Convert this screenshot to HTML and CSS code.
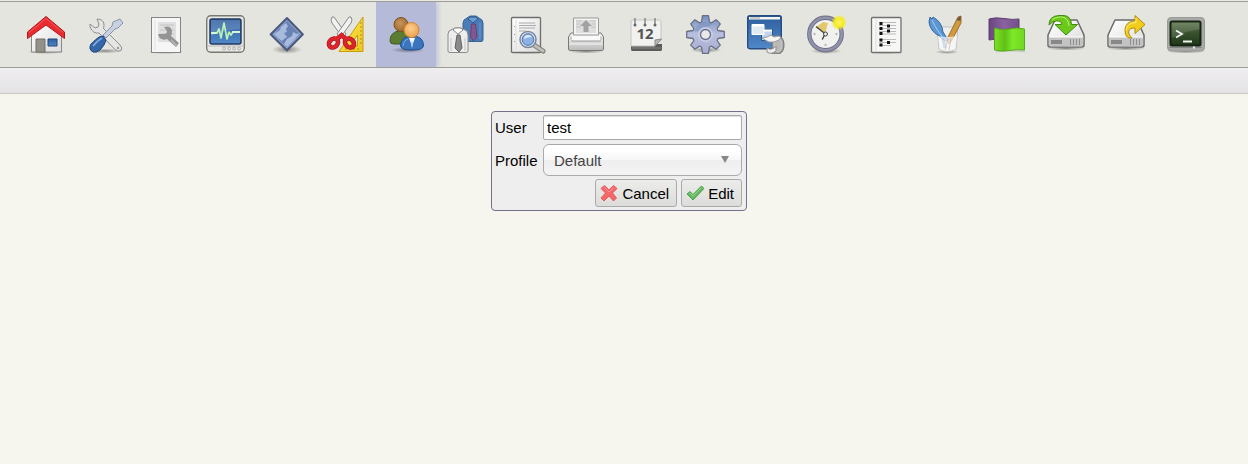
FILE: index.html
```html
<!DOCTYPE html>
<html lang="en">
<head>
    <meta charset="UTF-8">
    <meta name="viewport" content="width=device-width, initial-scale=1.0">
    <title>Edit User</title>
    <link rel="stylesheet" href="styles.css">
</head>
<body>
<svg class="defs" width="0" height="0" aria-hidden="true">
    <defs>
        <linearGradient id="white" x1="0" y1="0" x2="1" y2="1"><stop offset="0" stop-color="#fff"/><stop offset="1" stop-color="#dcdcdc"/></linearGradient>
        <linearGradient id="silver" x1="0" y1="0" x2="0" y2="1"><stop offset="0" stop-color="#f8f8f8"/><stop offset="1" stop-color="#b9bab8"/></linearGradient>
        <linearGradient id="blue" x1="0" y1="0" x2="0" y2="1"><stop offset="0" stop-color="#2f5e9e"/><stop offset="1" stop-color="#5088c8"/></linearGradient>
        <linearGradient id="gear" x1="0" y1="0" x2="0" y2="1"><stop offset="0" stop-color="#7790bd"/><stop offset=".5" stop-color="#b9bfdf"/><stop offset="1" stop-color="#a9add0"/></linearGradient>
        <linearGradient id="yellow" x1="0" y1="0" x2="1" y2="1"><stop offset="0" stop-color="#fce94f"/><stop offset="1" stop-color="#ecc820"/></linearGradient>
        <linearGradient id="purple"><stop offset="0" stop-color="#6a4580"/><stop offset=".5" stop-color="#8a62a0"/><stop offset="1" stop-color="#71508a"/></linearGradient>
        <linearGradient id="green"><stop offset="0" stop-color="#7fe02a"/><stop offset=".35" stop-color="#5ec014"/><stop offset=".6" stop-color="#7fe82a"/><stop offset="1" stop-color="#70d81e"/></linearGradient>
        <linearGradient id="screen" x1="0" y1="0" x2="0" y2="1"><stop offset="0" stop-color="#62794f"/><stop offset=".5" stop-color="#37502c"/><stop offset="1" stop-color="#1f3618"/></linearGradient>
        <radialGradient id="skin" cx=".45" cy=".4" r=".6"><stop offset="0" stop-color="#fbcf90"/><stop offset="1" stop-color="#eea04a"/></radialGradient>
        <radialGradient id="tan" cx=".45" cy=".4" r=".6"><stop offset="0" stop-color="#c9975c"/><stop offset="1" stop-color="#9c6a30"/></radialGradient>
        <radialGradient id="shadow"><stop offset="0" stop-color="#000" stop-opacity=".4"/><stop offset="1" stop-color="#000" stop-opacity="0"/></radialGradient>
        <radialGradient id="glow"><stop offset="0" stop-color="#fff66a"/><stop offset=".55" stop-color="#f5ea1e"/><stop offset="1" stop-color="#f5ea1e" stop-opacity="0"/></radialGradient>
        <g id="drive">
            <path d="M9 6h22l7 15v10q0 2-2 2H4q-2 0-2-2V21z" fill="url(#white)" stroke="#6a6a6a" stroke-width="1.500" stroke-linejoin="round"/>
            <path d="M2.800 23h34.400v8q0 1.400-2 1.400H4.800q-2 0-2-1.400z" fill="#c3c3c3"/>
            <path d="M3 23h34" stroke="#fff"/>
            <path d="M5 26h11v4H5z" fill="#888"/>
            <path d="M24.500 25v6M27.500 25v6M30.500 25v6M33.500 25v6" stroke="#8d8d8d"/>
        </g>
    </defs>
</svg>

<nav class="toolbar" aria-label="Main">
    <a href="#" aria-label="Home">
        <svg viewBox="0 0 40 40">
            <ellipse cx="20" cy="38" rx="19" ry="2" fill="url(#shadow)"/>
            <path d="M5.500 20L20 7l15.500 13v18h-30z" fill="url(#white)" stroke="#888"/>
            <path d="M10 25h9v13h-9z" fill="#92918a" stroke="#777168"/>
            <path d="M22 25h9v7h-9z" fill="url(#blue)" stroke="#20477a"/>
            <path d="M1.500 18L20 2.500 38.500 18v6.500L20 11 1.500 24.500z" fill="#ea2c30" stroke="#b5141a" stroke-linejoin="round"/>
            <path d="M3 18.500L20 4.500l17 14" fill="none" stroke="#f25a5a"/>
        </svg>
    </a>
    <a href="#" aria-label="Tools">
        <svg viewBox="0 0 40 40">
            <ellipse cx="19" cy="37" rx="17" ry="2.500" fill="url(#shadow)"/>
            <path d="M11 5q6 0 7 5 0 3-.5 4.500L34 31q3 3 1 5.500-3 2-6-1L13 19q-6 1-9-6l0-3 5 4q4 0 4-4z" fill="#e4e5e4" stroke="#8c8e8c" stroke-linejoin="round"/>
            <circle cx="32" cy="34" r="1.200" fill="#999"/>
            <path d="M34 5l3 4-5 5-3 1-9 9-3-3 9-9 1-4z" fill="#c9d0e0" stroke="#8a93aa" stroke-linejoin="round"/>
            <path d="M17 22l3 4q-1 5-6 10-3 3-7 2-5-3-2-8 5-5 8-7z" fill="#3567a8" stroke="#1e4680"/>
            <path d="M16 24q-5 3-9 8" fill="none" stroke="#83abe0" stroke-width="1.500"/>
        </svg>
    </a>
    <a href="#" aria-label="Report">
        <svg viewBox="0 0 40 40">
            <ellipse cx="20" cy="38" rx="18" ry="2" fill="url(#shadow)"/>
            <rect x="5.500" y="3.500" width="29" height="35" fill="#f6f6f6" stroke="#858585"/>
            <path d="M9 6v30" stroke="#e0e0e0"/>
            <path d="M12 8h18v20H12z" fill="#dfdfdf"/>
            <path d="M14 11h14M14 16h14M14 20h14M14 24h14" stroke="#c4c4c4"/>
            <path d="M18 13q7-2 8 4 0 3-1 5l8 7-3 4-9-8q-5 2-8-2l-1-3h6q3 0 3-3z" fill="#949494"/>
            <path d="M25 26l6 6" stroke="#b0b0b0" stroke-width="2"/>
        </svg>
    </a>
    <a href="#" aria-label="Monitor">
        <svg viewBox="0 0 40 40">
            <rect x=".7" y="1.700" width="37.600" height="36.600" rx="4" fill="#e8e9e5" stroke="#777a73" stroke-width="1.400"/>
            <path d="M2 32h35" stroke="#bbb"/>
            <rect x="4" y="5" width="31" height="25" rx="2" fill="url(#blue)" stroke="#203a62" stroke-width="1.500"/>
            <path d="M5 6h29v9q-15 0-29 7z" fill="#fff" opacity=".15"/>
            <path d="M5 19h6l2-4 2 9 3-15 3 16 2-7 2 3 2-3h7" fill="none" stroke="#b9f2b6" stroke-width="1.700" stroke-linejoin="round"/>
            <path d="M5 19h6M26 18h8" stroke="#e9ffe4" stroke-width="1.500"/>
            <g fill="#ddd" stroke="#aaa" stroke-width=".8"><circle cx="18" cy="34.500" r="1.500"/><circle cx="23" cy="34.500" r="1.500"/><circle cx="28" cy="34.500" r="1.500"/><circle cx="33" cy="34.500" r="1.500"/></g>
        </svg>
    </a>
    <a href="#" aria-label="Maps">
        <svg viewBox="0 0 40 40">
            <ellipse cx="21" cy="35.500" rx="15" ry="4.500" fill="url(#shadow)"/>
            <path d="M21 4l16 16.300L21 36.500 4.500 20.300z" fill="#6882b4" stroke="#4b587a" stroke-width="1.800" stroke-linejoin="round"/>
            <path d="M15 13l5-4 2 3-2 3 1 3-3 1 3 4-3 2-2 2-4-3-4-4 6-4zM21 25l5-3 1-4 4 2 3-1-5 6-8 8-3-3z" fill="#a9bbdc"/>
            <path d="M21 6.500l13.500 13.800L21 34 7 20.300z" fill="none" stroke="#9bafd4" stroke-width=".8"/>
        </svg>
    </a>
    <a href="#" aria-label="Cut">
        <svg viewBox="0 0 40 40">
            <path d="M37 3v34.500H13z" fill="url(#yellow)" stroke="#c99c0c" stroke-linejoin="round"/>
            <path d="M31.500 21v11H24z" fill="#ecede8" stroke="#c99c0c"/>
            <path d="M34 9h2M34 13h2M34 17h2M34 21h2M34 25h2M34 29h2M20 34v2M24 34v2M28 34v2M32 34v2" stroke="#b08a10"/>
            <path d="M6 3q-2 3 0 6l11 15 3-4L8 3z" fill="#f2f2f2" stroke="#888"/>
            <path d="M25 3q2 3 0 6L14 24l-3-4L23 3z" fill="#f2f2f2" stroke="#888"/>
            <g fill="none" stroke="#b0141b" stroke-width="4.600"><ellipse cx="7.500" cy="29" rx="4" ry="5" transform="rotate(45 7.500 29)"/><ellipse cx="23.500" cy="29" rx="4" ry="5" transform="rotate(-45 23.500 29)"/><path d="M11 25l6-5M20 25l-6-5"/></g>
            <g fill="none" stroke="#dd242b" stroke-width="3.200"><ellipse cx="7.500" cy="29" rx="4" ry="5" transform="rotate(45 7.500 29)"/><ellipse cx="23.500" cy="29" rx="4" ry="5" transform="rotate(-45 23.500 29)"/><path d="M11 25l6-5M20 25l-6-5"/></g>
        </svg>
    </a>
    <a href="#" aria-label="Users" class="active" aria-current="page">
        <svg viewBox="0 0 40 40">
            <ellipse cx="22" cy="36" rx="17" ry="3" fill="url(#shadow)"/>
            <path d="M4 27q0-8 8-10 9 0 11 6l-4 7H8q-4 0-4-3z" fill="#5c7c34" stroke="#3e5a1c"/>
            <circle cx="15" cy="10.500" r="7" fill="url(#tan)" stroke="#7c5220"/>
            <path d="M14.500 32q0-8 8-9.500h8q7 1.500 7 9.500-1 4-11.500 4t-11.500-4z" fill="#3a75be" stroke="#1d4e8e"/>
            <path d="M17 32q1-6 5-7" fill="none" stroke="#7faade"/>
            <path d="M23 24l3 8 3-8z" fill="#fff"/>
            <path d="M26 25l-1 6 1 3 1-3z" fill="#adc9ec"/>
            <circle cx="25.500" cy="16" r="7.500" fill="url(#skin)" stroke="#cf8630"/>
        </svg>
    </a>
    <a href="#" aria-label="Profiles">
        <svg viewBox="0 0 40 40">
            <path d="M18 6l6-4h6l6 4 1 3v17q0 1.500-2 1.500H19q-2 0-2-1.500V9z" fill="#4a7db8" stroke="#386496"/>
            <path d="M22 5l5 4 5-4-2-2h-6z" fill="#6f9dd2" stroke="#2b588f"/>
            <path d="M25.500 10h4l1.500 13-3.500 4-3-4z" fill="#83578e" stroke="#674070"/>
            <path d="M34 9v16" stroke="#6a9ad0"/>
            <path d="M3 17l6-3h6l6 3 1 4v16q0 1.500-2 1.500H4q-2 0-2-1.500V20z" fill="#ededed" stroke="#8a8a8a"/>
            <path d="M7 16l5 4 5-4-2-2H9z" fill="#fff" stroke="#8a8a8a"/>
            <path d="M11 21h3l2 13-3 4-4-4z" fill="#8b8b8b" stroke="#626262"/>
            <path d="M5 24v13M19 24v13" stroke="#c5c5c5"/>
        </svg>
    </a>
    <a href="#" aria-label="Search">
        <svg viewBox="0 0 40 40">
            <ellipse cx="20" cy="38" rx="18" ry="2" fill="url(#shadow)"/>
            <rect x="5.500" y="3.500" width="29" height="35" rx="1" fill="url(#white)" stroke="#6e6e6e" stroke-width="1.300"/>
            <path d="M13 9h16M13 11.500h17M13 14h16M13 17h7" stroke="#aaa"/>
            <path d="M10 6v30" stroke="#ddd"/>
            <path d="M8.500 12v1M8.500 20v1M8.500 27v1" stroke="#999"/>
            <path d="M28 31l9 6" stroke="#7a7a78" stroke-width="5" stroke-linecap="round"/>
            <path d="M28 31l9 6" stroke="#c0bdb9" stroke-width="3" stroke-linecap="round"/>
            <circle cx="22" cy="25.500" r="8" fill="#dce9fa" stroke="#7c8696" stroke-width="1.500"/>
            <circle cx="22" cy="25.500" r="5.800" fill="#8eb1e3" stroke="#456da7"/>
            <path d="M18 25q0-4 4-4 3 0 4 2-5 0-8 2z" fill="#d9e9ff"/>
        </svg>
    </a>
    <a href="#" aria-label="Print">
        <svg viewBox="0 0 40 40">
            <ellipse cx="20" cy="37.500" rx="18" ry="2" fill="url(#shadow)"/>
            <path d="M5 19h30l2.500 4v12q0 1.500-2 1.500H4.500q-2 0-2-1.500V23z" fill="url(#silver)" stroke="#777"/>
            <path d="M7.500 4h25v17h-25z" fill="#f4f4f4" stroke="#999"/>
            <path d="M10 6h20v13H10z" fill="#dedede"/>
            <path d="M20 6l6 6h-3.500v6h-5v-6H14z" fill="#a2a2a2"/>
            <path d="M10 7h6M24 7h6M10 10h4M26 10h4M10 13h5M25 13h5" stroke="#c4c4c4"/>
            <path d="M4 22h32v5H4z" fill="#fafafa"/>
            <path d="M5 22.500v3q0 1.500 2 1.500h26q2 0 2-1.500v-3" fill="none" stroke="#999"/>
            <path d="M3 30h34" stroke="#f3f3f3"/>
        </svg>
    </a>
    <a href="#" aria-label="Calendar">
        <svg viewBox="0 0 40 40">
            <path d="M5 30h31v5q0 2-1 2H6q-1 0-1-2z" fill="#5c5c5c"/>
            <path d="M6 34h29" stroke="#888"/>
            <path d="M6 6h28q1 0 1 2v18l-6 6H5V8q0-2 1-2z" fill="#f1f1ef" stroke="#c4c4c4"/>
            <path d="M35.500 25l-6.500 7v-6z" fill="#b8b8b8" stroke="#8a8a8a"/>
            <path d="M9 12V4M19 12V4M29 12V4" stroke="#888" stroke-width="1.500"/>
            <g fill="#666"><circle cx="9" cy="11" r="1.500"/><circle cx="19" cy="11" r="1.500"/><circle cx="29" cy="11" r="1.500"/></g>
            <text x="19" y="25" class="day">12</text>
        </svg>
    </a>
    <a href="#" aria-label="Settings">
        <svg viewBox="0 0 40 40">
            <ellipse cx="20" cy="36" rx="16" ry="3" fill="url(#shadow)"/>
            <path d="M15.500 8l1-6.300h6l1 6.300 2 .9 4.600-3.200 4.200 4.200-3.200 4.600.9 2 6.300 1v6l-6.300 1-.9 2 3.200 4.600-4.200 4.200-4.600-3.200-2 .9-1 6.300h-6l-1-6.300-2-.9-4.600 3.200-4.200-4.200 3.200-4.600-.9-2-6.300-1v-6l6.300-1 .9-2-3.200-4.600 4.200-4.200 4.600 3.200z" fill="url(#gear)" stroke="#6a7088" stroke-width="1.300" stroke-linejoin="round"/>
            <path d="M8 17q7 2 14-4t9-2l-4-1-6-2h-5l-5 4z" fill="#6987b9" opacity=".4"/>
            <circle cx="19.500" cy="20.500" r="6.500" fill="none" stroke="#c8cce6" stroke-width="2"/>
            <circle cx="19.500" cy="20.500" r="5" fill="#e8e9e8" stroke="#6b708a" stroke-width="1.300"/>
        </svg>
    </a>
    <a href="#" aria-label="Windows">
        <svg viewBox="0 0 40 40">
            <rect x="1.700" y="1.700" width="33.600" height="33" rx="2" fill="url(#blue)" stroke="#264c82" stroke-width="1.400"/>
            <path d="M3 3h31v2.500H3z" fill="#f5f6ef"/>
            <path d="M4 4h10" stroke="#a6a893"/>
            <path d="M15.500 15.500h11v11h-11z" fill="#c4d4eb" stroke="#275591"/>
            <path d="M16 16.500h10" stroke="#fff" stroke-width="2"/>
            <path d="M6 10.500h12v10H6z" fill="#e3e9f0" stroke="#fff"/>
            <path d="M6 11.500h12" stroke="#fff" stroke-width="2"/>
            <path d="M26 22h7q5 2 5 9t-5 9h-7z" fill="#9c9c9b" stroke="#737373"/>
            <ellipse cx="32" cy="31" rx="4" ry="7" fill="#b9b9b8" stroke="#d1d1cf"/>
            <path d="M16 24l5-1 4-2 3 2 4-1 3 1-2 3-5 2h-5l-4-2z" fill="#f5f5f3" stroke="#999"/>
            <path d="M21 34q5 3 9-2v5q-5 4-9 1z" fill="#ededeb" stroke="#929290"/>
        </svg>
    </a>
    <a href="#" aria-label="Schedule">
        <svg viewBox="0 0 40 40">
            <ellipse cx="20" cy="37" rx="16" ry="3" fill="url(#shadow)"/>
            <circle cx="19.500" cy="20" r="16.200" fill="#f1f1ef" stroke="#6d6e86" stroke-width="4.400"/>
            <circle cx="19.500" cy="20" r="16.200" fill="none" stroke="#9193ab" stroke-width="2.600"/>
            <path d="M19 20l-9-7 7-5 5 1z" fill="#e4c66b"/>
            <path d="M19.500 20l-9-7M19 20l-2.500 5" stroke="#444" stroke-width="1.500" stroke-linecap="round"/>
            <circle cx="19.500" cy="20" r="2" fill="#eee" stroke="#444"/>
            <g fill="#bbb"><circle cx="8.500" cy="20" r="1.200"/><circle cx="30.500" cy="20" r="1.200"/><circle cx="19.500" cy="31" r="1.200"/></g>
            <circle cx="33" cy="8.500" r="8" fill="url(#glow)"/>
        </svg>
    </a>
    <a href="#" aria-label="Lists">
        <svg viewBox="0 0 40 40">
            <ellipse cx="20" cy="38" rx="18" ry="2" fill="url(#shadow)"/>
            <rect x="5.500" y="3.500" width="29.500" height="35" rx="1" fill="#f7f7f6" stroke="#707070" stroke-width="1.300"/>
            <path d="M10 5v32" stroke="#ddd"/>
            <path d="M13 8.500h17M13 11.500h17M13 14.500h17M13 17.500h17M13 20h17M13 25.500h17M13 28.500h17M13 31.500h12" stroke="#bbb"/>
            <path d="M13.500 8h3v3h-3zM21 10.500h3v3h-3zM13.500 13h3v3h-3zM21 15.500h3v3h-3zM13.500 18h3v3h-3zM13.500 24.500h3v3h-3zM21 27h3v3h-3zM13.500 29.500h3v3h-3z" fill="#111"/>
        </svg>
    </a>
    <a href="#" aria-label="Design">
        <svg viewBox="0 0 40 40">
            <ellipse cx="21" cy="38" rx="12" ry="2" fill="url(#shadow)"/>
            <path d="M11 13h21l-2 22q-9 5-17 0z" fill="#efefef" stroke="#c1c1c1"/>
            <path d="M32 3l3-1 0 7-9 17-3 4-2-3 1-4z" fill="#d19a3b" stroke="#9a7030"/>
            <path d="M32 4l3-2-.5 5-4-1z" fill="#6a5642"/>
            <path d="M4 3l2 2 1-2q9 5 10 15l5 8-3 1-6-5q-9-5-10-14z" fill="#5c96d3" stroke="#35679e"/>
            <path d="M6 6q4 10 15 22" fill="none" stroke="#a7ccee"/>
            <path d="M12 22q9 2 19 0l-1.500 13q-9 4-16 0z" fill="#fafafa" opacity=".7"/>
            <path d="M22 25l-3 11M25 24l-2 12" stroke="#c89a92" opacity=".5"/>
            <path d="M17 24l2 10" stroke="#9bb6df" stroke-width="3" opacity=".4"/>
        </svg>
    </a>
    <a href="#" aria-label="Languages">
        <svg viewBox="0 0 40 40">
            <path d="M3 5q6-2 15-.5t15 .5v21q-8 2-15 0t-15 0z" fill="url(#purple)" stroke="#5e3c72"/>
            <path d="M10 37.500q14-2 29 0" fill="none" stroke="#000" stroke-width="2" opacity=".12"/>
            <path d="M8.500 14q8 3 15 1t15 0v21q-8-1-15 .5t-15-.5z" fill="url(#green)" stroke="#55ad18"/>
        </svg>
    </a>
    <a href="#" aria-label="Save">
        <svg viewBox="0 0 40 40">
            <ellipse cx="20" cy="34.500" rx="20" ry="2" fill="url(#shadow)"/>
            <use href="#drive"/>
            <path d="M3 11q0-9 10-9.500h4q8 0 8.500 9h6L20 21 9 10.500h6.500q0-4-5-3.500-4 0-7.500 4z" fill="#6cc91c" stroke="#43890f" stroke-linejoin="round"/>
            <path d="M6 6q3-3 9-3 7 0 8 9" fill="none" stroke="#a9ec62" stroke-width="1.200"/>
        </svg>
    </a>
    <a href="#" aria-label="Restore">
        <svg viewBox="0 0 40 40">
            <ellipse cx="20" cy="34.500" rx="20" ry="2" fill="url(#shadow)"/>
            <use href="#drive"/>
            <path d="M29 1.500l10 9-10 9V14q-6 0-6.500 4 0 3 3.500 6-7 1-7-8 0-8 10-9.500z" fill="#f2cd1e" stroke="#b08c08" stroke-linejoin="round"/>
            <path d="M30 4v4.500q-9 0-10 8" fill="none" stroke="#fdee86"/>
        </svg>
    </a>
    <a href="#" aria-label="Terminal">
        <svg viewBox="0 0 40 40">
            <ellipse cx="20" cy="37.500" rx="20" ry="2" fill="url(#shadow)"/>
            <rect x="1.500" y="3.500" width="37" height="33.500" rx="3.500" fill="#a8aaa7" stroke="#989a97"/>
            <rect x="4.500" y="7.500" width="30" height="24" rx="1.500" fill="url(#screen)" stroke="#172412" stroke-width="2"/>
            <path d="M5.500 8.500h28v7q-14 1-28 9z" fill="#fff" opacity=".12"/>
            <path d="M10 16.500l6 3.500-6 3.500M17 27.500h9" fill="none" stroke="#eef4ea" stroke-width="1.800"/>
            <path d="M3 33.500h33" stroke="#858784"/>
            <circle cx="28" cy="33.500" r="1.200" fill="#ddd"/>
        </svg>
    </a>
</nav>
<div class="subbar"></div>

<main>
    <form class="user-form">
        <label for="user">User</label>
        <input type="text" id="user" name="user" value="test">

        <label for="profile">Profile</label>
        <div class="select-box">
            <select id="profile" name="profile">
                <option>Default</option>
            </select>
        </div>

        <div class="buttons">
            <button type="button">
                <svg viewBox="0 0 18 18" aria-hidden="true">
                    <path d="M4.500 1.500L9 6l4.500-4.500 3.500 3L12.500 9l4 5-3 3L9 12l-5 5-3-3 4.500-5L1 4.500z" fill="#f4686a" stroke="#e8585b" stroke-linejoin="round"/>
                    <path d="M4.500 3.500L9 8l4.500-4.500" fill="none" stroke="#f99a9a"/>
                </svg>
                Cancel
            </button>
            <button type="submit">
                <svg viewBox="0 0 18 18" aria-hidden="true">
                    <path d="M1 10l3-2.500 3 3L15.500 2 18 4.500 7 16z" fill="#66bb60" stroke="#4f9f4b" stroke-linejoin="round"/>
                    <path d="M4 9l3 3 8.500-8.500" fill="none" stroke="#98d292"/>
                </svg>
                Edit
            </button>
        </div>
    </form>
</main>
</body>
</html>
```
FILE: styles.css
```css
body {
    margin: 0;
    background-color: #f6f5ee;
    font-family: "Liberation Sans", Arial, sans-serif;
    font-size: 15px;
    color: #000;
}
.defs {
    display: block;
}
.toolbar {
    display: flex;
    margin-top: 1px;
    padding: 0 16px;
    background-color: #e5e5e0;
    border-top: 1px solid #9c9d94;
    border-bottom: 1px solid #9c9d94;
    box-shadow: 0 -1px #e9e9e5;
}
.toolbar a {
    box-sizing: border-box;
    width: 60px;
    height: 65px;
    padding: 12px 10px;
}
.toolbar a.active {
    background-color: #b5bad8;
    box-shadow: 3px 0 4px #c8cbdc;
    clip-path: inset(0 -8px 0 0);
}
.toolbar svg {
    display: block;
    width: 40px;
    height: 40px;
}
.day {
    font-family: "Open Sans", sans-serif;
    font-size: 15px;
    font-weight: bold;
    text-anchor: middle;
    fill: #555;
}
.subbar {
    height: 25px;
    background: linear-gradient(#efeef0, #e4e2e5);
    border-bottom: 1px solid #c9c8c6;
}
main {
    display: flex;
    justify-content: center;
    padding: 17px 10px 0 0;
}
.user-form {
    display: grid;
    grid-template-columns: 44px 199px;
    gap: 4px;
    align-items: center;
    padding: 3px 4px 3px 3px;
    background-color: #eee;
    border: 1px solid #73718f;
    border-radius: 4px;
}
.user-form input {
    box-sizing: border-box;
    width: 100%;
    height: 25px;
    padding: 0 3px;
    border: 1px solid #aaa;
    border-radius: 2px;
    box-shadow: inset 0 1px 1px #ddd;
    background-color: #fff;
    font: inherit;
}
.select-box {
    position: relative;
}
.select-box::after {
    content: "";
    position: absolute;
    top: 12px;
    right: 13px;
    border: solid transparent;
    border-width: 7px 4px 0;
    border-top-color: #888;
    pointer-events: none;
}
.user-form select {
    display: block;
    appearance: none;
    width: 100%;
    height: 32px;
    padding: 0 10px;
    border: 1px solid #aaa;
    border-radius: 6px;
    background: linear-gradient(#fff 20%, #f6f6f6 50%, #eee 52%, #f4f4f4 100%);
    color: #444;
    font: inherit;
}
.buttons {
    grid-column: 1 / 3;
    display: flex;
    justify-content: flex-end;
    gap: 4px;
    margin-top: -1px;
}
.buttons button {
    display: flex;
    align-items: center;
    gap: 4px;
    height: 28px;
    padding: 0 7px 0 4px;
    border: 1px solid #aaa;
    border-radius: 3px;
    background: linear-gradient(#ececea, #dcdcda);
    color: #000;
    font: inherit;
    cursor: pointer;
}
.buttons svg {
    width: 18px;
    height: 18px;
}
```
